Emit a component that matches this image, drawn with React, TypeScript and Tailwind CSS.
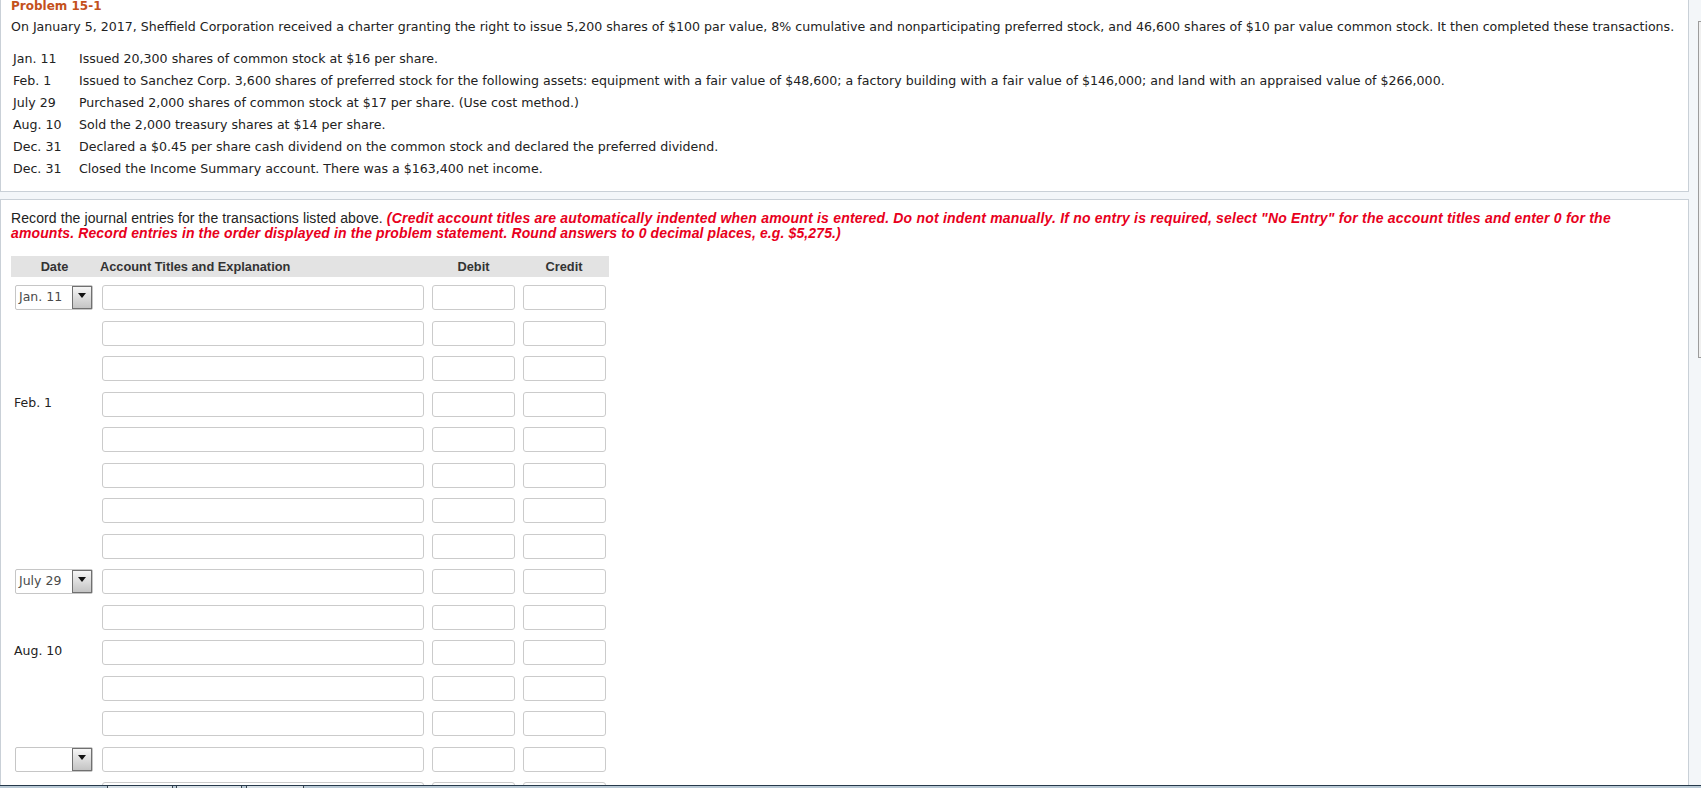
import React from "react";

const verdana = "font-['DejaVu_Sans',Verdana,sans-serif]";
const tahoma = "font-['Liberation_Sans',Tahoma,Arial,sans-serif]";

const transactions: [string, string][] = [
  ["Jan. 11", "Issued 20,300 shares of common stock at $16 per share."],
  [
    "Feb. 1",
    "Issued to Sanchez Corp. 3,600 shares of preferred stock for the following assets: equipment with a fair value of $48,600; a factory building with a fair value of $146,000; and land with an appraised value of $266,000.",
  ],
  ["July 29", "Purchased 2,000 shares of common stock at $17 per share. (Use cost method.)"],
  ["Aug. 10", "Sold the 2,000 treasury shares at $14 per share."],
  [
    "Dec. 31",
    "Declared a $0.45 per share cash dividend on the common stock and declared the preferred dividend.",
  ],
  ["Dec. 31", "Closed the Income Summary account. There was a $163,400 net income."],
];

type JournalRow = { select?: string; label?: string };

const rows: JournalRow[] = [
  { select: "Jan. 11" },
  {},
  {},
  { label: "Feb. 1" },
  {},
  {},
  {},
  {},
  { select: "July 29" },
  {},
  { label: "Aug. 10" },
  {},
  {},
  { select: "" },
  {},
];

function DateSelect({ value }: { value: string }) {
  return (
    <div className="ml-[4px] flex h-[25px] w-[78px] items-center rounded-[2px] border border-[#c6c6c6] bg-white">
      <span className={`flex-1 pl-[3px] text-[12.5px] text-[#4a4a4a] ${verdana}`}>{value}</span>
      <div className="flex h-[23px] w-[20px] justify-center border border-[#707070] bg-linear-to-b from-[#f6f6f6] to-[#c4c4c4] pt-[6px]">
        <svg width="8" height="5" viewBox="0 0 8 5">
          <path d="M0 0h8L4 5z" fill="#111" />
        </svg>
      </div>
    </div>
  );
}

function Field() {
  return (
    <input
      type="text"
      readOnly
      className="h-full w-full rounded-[3px] border border-[#cbcbcb] bg-white outline-none"
    />
  );
}

export default function App() {
  return (
    <div className="flex h-[788px] w-[1701px] flex-col overflow-hidden bg-[#f3f6f9] text-[#222]">
      <div className="flex min-h-0 flex-1 overflow-hidden">
        <div className="w-[1689px] shrink-0">
          {/* problem statement */}
          <div className={`border-x border-b border-[#c9d0d7] bg-white pb-[11px] pl-[10px] text-[12.6px] ${verdana}`}>
            <div className="text-[12px] font-bold leading-[12px] text-[#c4511c]">Problem 15-1</div>
            <div className="mt-[4px] whitespace-nowrap leading-[22px]">
              On January 5, 2017, Sheffield Corporation received a charter granting the right to issue 5,200 shares of
              $100 par value, 8% cumulative and nonparticipating preferred stock, and 46,600 shares of $10 par value
              common stock. It then completed these transactions.
            </div>
            <div className="mt-[10px]">
              {transactions.map(([d, t], i) => (
                <div key={i} className="flex whitespace-nowrap leading-[22px]">
                  <div className="w-[68px] shrink-0 pl-[2px]">{d}</div>
                  <div>{t}</div>
                </div>
              ))}
            </div>
          </div>

          {/* journal entry */}
          <div className="mt-[7px] h-[700px] border border-[#c9d0d7] bg-white pl-[10px] pt-[11px]">
            <div className={`text-[14px] leading-[15px] tracking-[0.1px] ${tahoma}`}>
              <div className="whitespace-nowrap">
                Record the journal entries for the transactions listed above.{" "}
                <span className="font-bold italic tracking-[0.2px] text-[#e8001c]">
                  (Credit account titles are automatically indented when amount is entered. Do not indent manually. If
                  no entry is required, select "No Entry" for the account titles and enter 0 for the
                </span>
              </div>
              <div className="whitespace-nowrap font-bold italic tracking-[0.12px] text-[#e8001c]">
                amounts. Record entries in the order displayed in the problem statement. Round answers to 0 decimal
                places, e.g. $5,275.)
              </div>
            </div>

            <div className={`mt-[15px] flex h-[21px] w-[598px] items-center bg-[#e3e3e3] text-[12.8px] font-bold text-[#333] ${tahoma}`}>
              <div className="w-[87px] text-center">Date</div>
              <div className="w-[330px] pl-[2px]">Account Titles and Explanation</div>
              <div className="w-[91px] text-center">Debit</div>
              <div className="w-[90px] text-center">Credit</div>
            </div>

            <div className="mt-[8px] flex flex-col gap-[10.5px]">
              {rows.map((r, i) => (
                <div key={i} className="flex h-[25px] w-[598px]">
                  <div className="w-[87px] shrink-0">
                    {r.select !== undefined && <DateSelect value={r.select} />}
                    {r.label && (
                      <div className={`pl-[3px] pt-[3px] text-[12.5px] leading-[15px] ${verdana}`}>{r.label}</div>
                    )}
                  </div>
                  <div className="w-[330px] shrink-0 px-[4px]">
                    <Field />
                  </div>
                  <div className="w-[91px] shrink-0 px-[4px]">
                    <Field />
                  </div>
                  <div className="w-[90px] shrink-0 pl-[4px] pr-[3px]">
                    <Field />
                  </div>
                </div>
              ))}
            </div>
          </div>
        </div>

        {/* window scrollbar edge */}
        <div className="flex-1">
          <div className="ml-[9px] mt-[21px] h-[337px] border-y border-l border-[#9c9c9c] bg-[#f0f0f0]" />
        </div>
      </div>

      {/* taskbar top */}
      <div className="flex h-[3px] shrink-0 border-t border-[#26394a] bg-[#b9c9d5]">
        <div className="ml-[107px] w-[66px] border-x border-[#3a4650] bg-[#d8e0e6]" />
        <div className="ml-[3px] w-[66px] border-x border-[#3a4650] bg-[#d8e0e6]" />
        <div className="ml-[4px] w-[58px] border-x border-[#3a4650] bg-[#d8e0e6]" />
      </div>
    </div>
  );
}
